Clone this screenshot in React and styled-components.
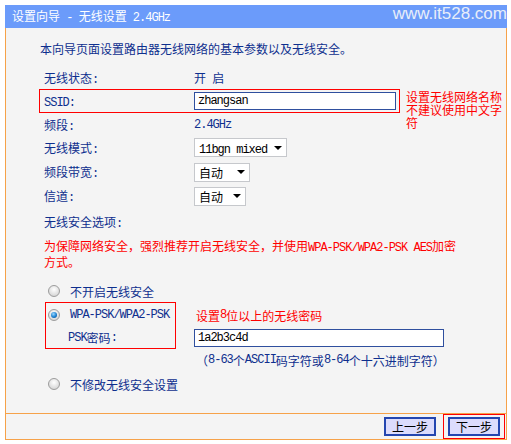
import styled, { createGlobalStyle } from "styled-components";

// Router setup wizard – wireless settings page (TP-Link style)

const BLUE = "#0e2f8e";
const RED = "#ff0000";
const ORANGE = "#f6a249";

const GlobalStyle = createGlobalStyle`
  html, body {
    margin: 0;
    background: #fff;
  }
  body {
    font-family: "Noto Sans CJK SC", "Liberation Sans", sans-serif;
    font-size: 12px;
  }
`;

// latin runs in the old SimSun pages are half-width monospace
const M = styled.span`
  font-family: "Liberation Mono", monospace;
  font-size: 12px;
  letter-spacing: -1px;
`;

const mix = (s) =>
  s.split(/([ -~]+)/).map((p, i) => (i % 2 ? <M key={i}>{p}</M> : p));

const Frame = styled.div`
  margin: 5px 0 0 5px;
  width: 502px;
`;

const Header = styled.div`
  display: flex;
  justify-content: space-between;
  height: 23px;
  padding-left: 7px;
  background: #6b9bfa;
  color: #fff;
`;

const Title = styled.div`
  align-self: center;
  line-height: 14px;
`;

const Watermark = styled.div`
  align-self: flex-start;
  font-family: "Liberation Sans", sans-serif;
  font-size: 17px;
  line-height: 17px;
  color: #e8eef9;
`;

const Body = styled.div`
  display: flex;
  flex-direction: column;
  box-sizing: border-box;
  height: 385px;
  padding: 8px 0 0 33px;
  background: #f4f4f4;
  border-left: 1px solid ${ORANGE};
  border-right: 1px solid ${ORANGE};
  color: ${BLUE};
`;

const Intro = styled.div`
  display: flex;
  align-items: center;
  height: 24px;
  padding-left: 1px;
`;

const Row = styled.div`
  position: relative;
  display: flex;
  align-items: center;
  box-sizing: border-box;
  width: 361px;
  height: ${(p) => p.$h}px;
  margin-top: ${(p) => p.$mt || 0}px;
  padding-left: 4px;
  border: 1px solid ${(p) => (p.$mark ? RED : "transparent")};
`;

const Label = styled.div`
  flex-shrink: 0;
  width: 150px;
`;

const Note = styled.div`
  position: absolute;
  left: calc(100% + 7px);
  top: 0;
  color: ${RED};
  line-height: 13px;
  white-space: nowrap;
`;

const TextInput = styled.input`
  box-sizing: border-box;
  width: ${(p) => p.$w}px;
  height: 18px;
  margin: 0;
  padding: 0 3px;
  border: 1px solid #2f4f9e;
  background: #fff;
  color: #000;
  font-family: "Liberation Mono", monospace;
  font-size: 12px;
  letter-spacing: -1px;
  outline: none;
`;

const SelectBox = styled.div`
  display: flex;
  align-items: center;
  justify-content: space-between;
  box-sizing: border-box;
  width: ${(p) => p.$w}px;
  height: 19px;
  padding: 0 4px 0 4px;
  border: 1px solid #c6c8cc;
  background: #fff;
  color: #000;
`;

const Arrow = styled.span`
  width: 0;
  height: 0;
  border-left: 4px solid transparent;
  border-right: 4px solid transparent;
  border-top: 4px solid #000;
`;

const Warning = styled.div`
  margin-top: 6px;
  padding-left: 5px;
  line-height: 13px;
  color: ${RED};
  white-space: nowrap;
`;

const RadioLine = styled.div`
  display: flex;
  align-items: center;
  gap: 10px;
  height: ${(p) => p.$h}px;
  margin-top: ${(p) => p.$mt || 0}px;
  margin-left: ${(p) => p.$ml || 0}px;
  padding-left: ${(p) => p.$pl || 0}px;
`;

const Radio = styled.span`
  position: relative;
  flex-shrink: 0;
  box-sizing: border-box;
  width: 12px;
  height: 12px;
  border-radius: 50%;
  border: 1px solid #9c9c9c;
  background: radial-gradient(circle at 50% 35%, #ffffff, #d6d6d6 80%);

  &::after {
    content: "";
    display: ${(p) => (p.$on ? "block" : "none")};
    position: absolute;
    inset: 2px;
    border-radius: 50%;
    background: radial-gradient(circle at 40% 35%, #9ad8ff, #1a7fd0 55%, #08427e);
  }
`;

const WpaWrap = styled.div`
  display: flex;
  height: 47px;
  margin-left: 6px;
`;

const WpaBox = styled.div`
  box-sizing: border-box;
  width: 131px;
  padding-left: 2px;
  border: 1px solid ${RED};
`;

const PskLine = styled.div`
  display: flex;
  align-items: center;
  height: 21px;
  padding-left: 20px;
`;

const Side = styled.div`
  margin-left: 18px;
  padding-top: 1px;
`;

const SideNote = styled.div`
  display: flex;
  align-items: center;
  height: 24px;
  padding-left: 2px;
  color: ${RED};
`;

const SideInput = styled.div`
  display: flex;
  align-items: center;
  height: 21px;
`;

const Hint = styled.div`
  display: flex;
  align-items: center;
  height: 22px;
  margin-left: 157px;
`;

const Footer = styled.div`
  display: flex;
  justify-content: flex-end;
  align-items: center;
  gap: 7px;
  box-sizing: border-box;
  height: 27px;
  padding-right: 1px;
  background: #f4f4f4;
  border: 1px solid ${ORANGE};
`;

const Focus = styled.div`
  display: flex;
  padding: 2px 4px;
  border: 1px solid ${RED};
`;

const Button = styled.button`
  width: 52px;
  height: 19px;
  padding: 0;
  background: #dcdcfc;
  border: 2px solid #2446b0;
  color: #000;
  font-family: "Noto Sans CJK SC", sans-serif;
  font-size: 12px;
  line-height: 14px;
`;

function Select({ w, value }) {
  return (
    <SelectBox $w={w}>
      <span>{mix(value)}</span>
      <Arrow />
    </SelectBox>
  );
}

export default function App() {
  return (
    <>
      <GlobalStyle />
      <Frame>
        <Header>
          <Title>{mix("设置向导 - 无线设置 2.4GHz")}</Title>
          <Watermark>www.it528.com</Watermark>
        </Header>

        <Body>
          <Intro>本向导页面设置路由器无线网络的基本参数以及无线安全。</Intro>

          <Row $h={22} $mt={7}>
            <Label>{mix("无线状态:")}</Label>
            <span>{mix("开 启")}</span>
          </Row>
          <Row $h={24} $mark>
            <Label>{mix("SSID:")}</Label>
            <TextInput $w={202} defaultValue="zhangsan" />
            <Note>
              设置无线网络名称
              <br />
              不建议使用中文字
              <br />
              符
            </Note>
          </Row>
          <Row $h={24}>
            <Label>{mix("频段:")}</Label>
            <M>2.4GHz</M>
          </Row>
          <Row $h={21}>
            <Label>{mix("无线模式:")}</Label>
            <Select w={93} value="11bgn mixed" />
          </Row>
          <Row $h={28}>
            <Label>{mix("频段带宽:")}</Label>
            <Select w={56} value="自动" />
          </Row>
          <Row $h={20}>
            <Label>{mix("信道:")}</Label>
            <Select w={52} value="自动" />
          </Row>

          <Row $h={22} $mt={5}>
            <Label>{mix("无线安全选项:")}</Label>
          </Row>
          <Warning>
            {mix("为保障网络安全，强烈推荐开启无线安全，并使用WPA-PSK/WPA2-PSK AES加密")}
            <br />
            方式。
          </Warning>

          <RadioLine $h={22} $mt={12} $ml={6} $pl={3}>
            <Radio />
            <span>不开启无线安全</span>
          </RadioLine>

          <WpaWrap>
            <WpaBox>
              <RadioLine $h={24}>
                <Radio $on />
                <M>WPA-PSK/WPA2-PSK</M>
              </RadioLine>
              <PskLine>{mix("PSK密码:")}</PskLine>
            </WpaBox>
            <Side>
              <SideNote>{mix("设置8位以上的无线密码")}</SideNote>
              <SideInput>
                <TextInput $w={250} defaultValue="1a2b3c4d" />
              </SideInput>
            </Side>
          </WpaWrap>

          <Hint>{mix("（8-63个ASCII码字符或8-64个十六进制字符）")}</Hint>

          <RadioLine $h={24} $mt={1} $ml={6} $pl={3}>
            <Radio />
            <span>不修改无线安全设置</span>
          </RadioLine>
        </Body>

        <Footer>
          <Button>上一步</Button>
          <Focus>
            <Button>下一步</Button>
          </Focus>
        </Footer>
      </Frame>
    </>
  );
}
